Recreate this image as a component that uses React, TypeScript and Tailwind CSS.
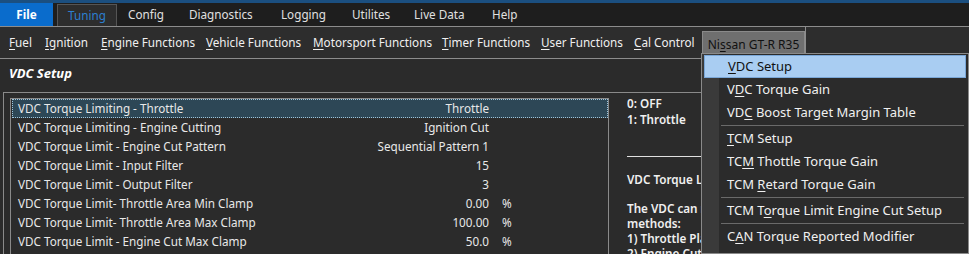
import React from "react";

const rows: [string, string, string][] = [
  ["VDC Torque Limiting - Throttle", "Throttle", ""],
  ["VDC Torque Limiting - Engine Cutting", "Ignition Cut", ""],
  ["VDC Torque Limit - Engine Cut Pattern", "Sequential Pattern 1", ""],
  ["VDC Torque Limit - Input Filter", "15", ""],
  ["VDC Torque Limit - Output Filter", "3", ""],
  ["VDC Torque Limit- Throttle Area Min Clamp", "0.00", "%"],
  ["VDC Torque Limit- Throttle Area Max Clamp", "100.00", "%"],
  ["VDC Torque Limit - Engine Cut Max Clamp", "50.0", "%"],
];

function U({ c }: { c: string }) {
  return <span className="underline underline-offset-2">{c}</span>;
}

const menuItems: React.ReactNode[] = [
  <span><U c="V" />DC Setup</span>,
  <span>V<U c="D" />C Torque Gain</span>,
  <span>VD<U c="C" /> Boost Target Margin Table</span>,
  "sep",
  <span><U c="T" />CM Setup</span>,
  <span>TC<U c="M" /> Thottle Torque Gain</span>,
  <span>TCM <U c="R" />etard Torque Gain</span>,
  "sep",
  <span>TCM T<U c="o" />rque Limit Engine Cut Setup</span>,
  "sep",
  <span>C<U c="A" />N Torque Reported Modifier</span>,
];

export default function App() {
  const font = { fontFamily: '"Noto Sans", "Open Sans", sans-serif' };
  return (
    <div
      className="relative w-[969px] h-[254px] overflow-hidden bg-[#2b2b2b] text-[#e8e8e8] text-[11.7px] whitespace-nowrap"
      style={font}
    >
      <div className="h-[3px] bg-[#1b4f80]" />
      <div className="h-[23px] bg-[#1e1e1e] flex items-stretch">
        <div className="w-[53px] bg-[#0a6ccc] text-white font-bold flex items-center justify-center">
          File
        </div>
        <div className="ml-[4px] mt-[1px] w-[60px] bg-[#2d2d2d] border border-b-0 border-[#555] text-[#2c7fd0] flex items-center justify-center">
          Tuning
        </div>
        <div className="flex items-center text-[#e0e0e0] pl-[11px]">
          <span className="w-[61px]">Config</span>
          <span className="w-[92px]">Diagnostics</span>
          <span className="w-[71px]">Logging</span>
          <span className="w-[62px]">Utilites</span>
          <span className="w-[78px]">Live Data</span>
          <span>Help</span>
        </div>
      </div>
      <div className="h-[1px] bg-[#8c8c8c]" />
      <div className="h-[31px] bg-[#2d2d2d] flex items-center text-[#f0f0f0] pl-[9px]">
        <span className="w-[36px]"><U c="F" />uel</span>
        <span className="w-[56px]"><U c="I" />gnition</span>
        <span className="w-[105px]"><U c="E" />ngine Functions</span>
        <span className="w-[107px]"><U c="V" />ehicle Functions</span>
        <span className="w-[129px]"><U c="M" />otorsport Functions</span>
        <span className="w-[99px]"><U c="T" />imer Functions</span>
        <span className="w-[93px]"><U c="U" />ser Functions</span>
        <span className="w-[68px]"><U c="C" />al Control</span>
        <div className="self-end h-[27px] w-[103px] bg-[#6f6f6f] border border-b-0 border-[#8a8a8a] text-[#111] text-[12px] flex items-center justify-center">
          <span>Ni<U c="s" />san GT-R R35</span>
        </div>
        <div className="self-stretch w-[1px] bg-[#8c8c8c]" />
      </div>
      <div className="h-[1px] bg-[#8c8c8c]" />
      <div className="h-[33px] flex items-center pb-[4px] pl-[9px] font-bold italic text-white text-[13px]">
        VDC Setup
      </div>
      <div className="ml-[3px] border-t border-l border-[#8a8a8a] h-[200px] pl-[6px] pt-[5px]">
        <div className="flex h-full">
          <div className="w-[599px] border-l border-t border-r border-[#8a8a8a] bg-[#2b2b2b] pl-[1px]">
            {rows.map(([n, v, u], i) => (
              <div
                key={i}
                className={
                  "h-[19px] flex items-center " +
                  (i === 0
                    ? "bg-[#2d4756] border border-dotted border-[#9fc4da]"
                    : "border border-transparent")
                }
              >
                <span className="pl-[5px] w-[280px]">{n}</span>
                <span className="w-[196px] text-right">{v}</span>
                <span className="pl-[13px]">{u}</span>
              </div>
            ))}
          </div>
          <div className="pl-[18px] -mt-[2px] font-semibold text-[#f0f0f0] leading-[15px]">
            <div>0: OFF</div>
            <div className="mt-[1px]">1: Throttle</div>
            <div className="mt-[29px] h-[1px] w-[300px] bg-[#e0e0e0]" />
            <div className="mt-[15px]">VDC Torque Limiting</div>
            <div className="mt-[14px]">The VDC can request torque reduction by two</div>
            <div>methods:</div>
            <div>1) Throttle Plate</div>
            <div>2) Engine Cutting</div>
          </div>
        </div>
      </div>

      <div className="absolute left-[701px] top-[53px] w-[268px] h-[201px] bg-[#2b2b2b] border border-[#8a8a8a] text-[13px] text-[#f0f0f0]">
        <div className="absolute left-0 top-0 bottom-0 w-[17px] bg-[#3a3a3a]" />
        <div className="relative pt-[1px] px-[2px]">
          {menuItems.map((m, i) =>
            m === "sep" ? (
              <div key={i} className="ml-[17px] mr-[2px] my-[1px] h-[1px] bg-[#6a6a6a]" />
            ) : (
              <div
                key={i}
                className={
                  "h-[23px] flex items-center pl-[23px] " +
                  (i === 0 ? "bg-[#a9cdf2] text-[#111] border border-[#7aa7d8]" : "")
                }
              >
                {m}
              </div>
            )
          )}
        </div>
      </div>
    </div>
  );
}
